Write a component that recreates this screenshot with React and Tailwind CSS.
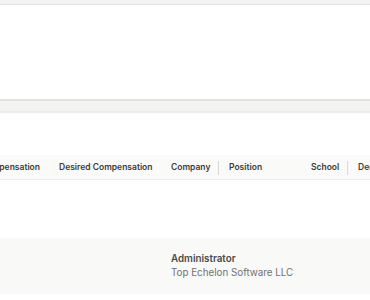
const font = { fontFamily: 'Inter, "Noto Sans", sans-serif' };

const Sep = () => <span className="h-[14px] w-px bg-[#d9d9d6]" />;

export default function App() {
  return (
    <div className="w-[370px] h-[300px] overflow-hidden bg-white" style={font}>
      <div className="h-[4px] bg-[#f3f3f2] border-b border-[#e2e2e0] box-content" />
      <div className="h-[94px] bg-white" />
      <div className="h-[10px] bg-[#f3f3f2] border-t-2 border-b-2 border-t-[#e3e3e1] border-b-[#ececea] box-content" />
      <div className="h-[42px] bg-white" />

      <div className="h-[25px] pt-px bg-[#fafaf9] border-b border-[#ececea] box-border flex items-center overflow-hidden text-[8.5px] font-semibold text-[#3a3a38] whitespace-nowrap">
        <div className="w-[50px] shrink-0 flex justify-end pr-[10px]">Current Compensation</div>
        <div className="w-[111px] shrink-0 pl-[9px]">Desired Compensation</div>
        <div className="w-[58px] shrink-0 pl-[10px] flex items-center justify-between">
          <span>Company</span>
          <Sep />
        </div>
        <div className="w-[82px] shrink-0 pl-[10px]">Position</div>
        <div className="w-[47px] shrink-0 pl-[10px] flex items-center justify-between">
          <span>School</span>
          <Sep />
        </div>
        <div className="shrink-0 pl-[10px]">Degree</div>
      </div>

      <div className="h-[58px] bg-white" />

      <div className="h-[56px] bg-[#f9f9f8] flex flex-col justify-center pl-[171px] text-[9.8px] leading-[14px]">
        <div className="font-semibold text-[#4a4a48]">Administrator</div>
        <div className="text-[#727270]">Top Echelon Software LLC</div>
      </div>
    </div>
  );
}
